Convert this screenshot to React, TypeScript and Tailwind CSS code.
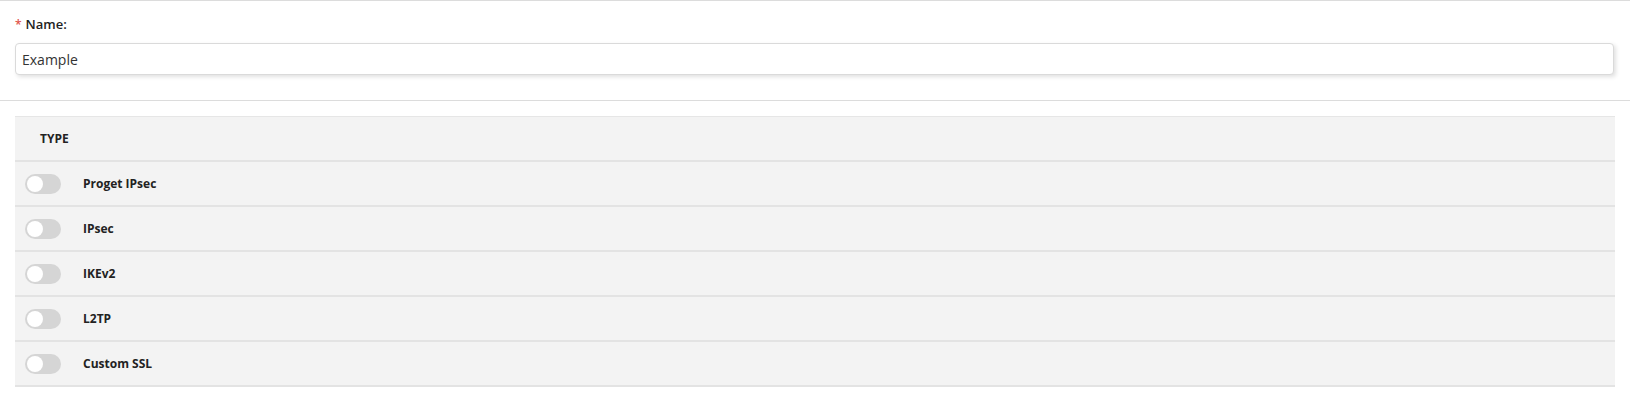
import React from "react";

const rows = ["Proget IPsec", "IPsec", "IKEv2", "L2TP", "Custom SSL"];

function Toggle() {
  return (
    <div className="w-[36px] h-[20px] rounded-full bg-[#d5d5d5] flex items-center px-[2px] shrink-0">
      <div className="w-[16px] h-[16px] rounded-full bg-white" />
    </div>
  );
}

export default function App() {
  return (
    <div
      className="w-[1630px] h-[401px] bg-white text-[#222]"
      style={{ fontFamily: '"Open Sans", "Noto Sans", sans-serif' }}
    >
      <div className="border-t border-[#dcdcdc] border-b px-[15px] pt-[14px] pb-[25px]">
        <div className="flex items-center h-[20px] text-[13px] font-semibold text-[#222]">
          <span className="text-[#e0524a] mr-[4px] text-[12px]">*</span>
          <span>Name:</span>
        </div>
        <div className="mt-[8px] mr-[1px] h-[32px] rounded-[4px] border border-[#dadada] bg-white shadow-[2px_2px_4px_rgba(0,0,0,0.12)] flex items-center px-[6px] text-[14px] text-[#333]">
          Example
        </div>
      </div>
      <div className="mx-[15px] mt-[15px] bg-[#f3f3f3] border-t border-[#e6e6e6]">
        <div className="h-[45px] border-b-2 border-[#e3e3e3] flex items-center pl-[25px] text-[12px] font-bold text-[#222]">
          TYPE
        </div>
        {rows.map((r) => (
          <div
            key={r}
            className="h-[45px] border-b-2 border-[#e3e3e3] flex items-center pl-[10px]"
          >
            <Toggle />
            <span className="ml-[22px] text-[12px] font-bold text-[#222]">{r}</span>
          </div>
        ))}
      </div>
    </div>
  );
}
